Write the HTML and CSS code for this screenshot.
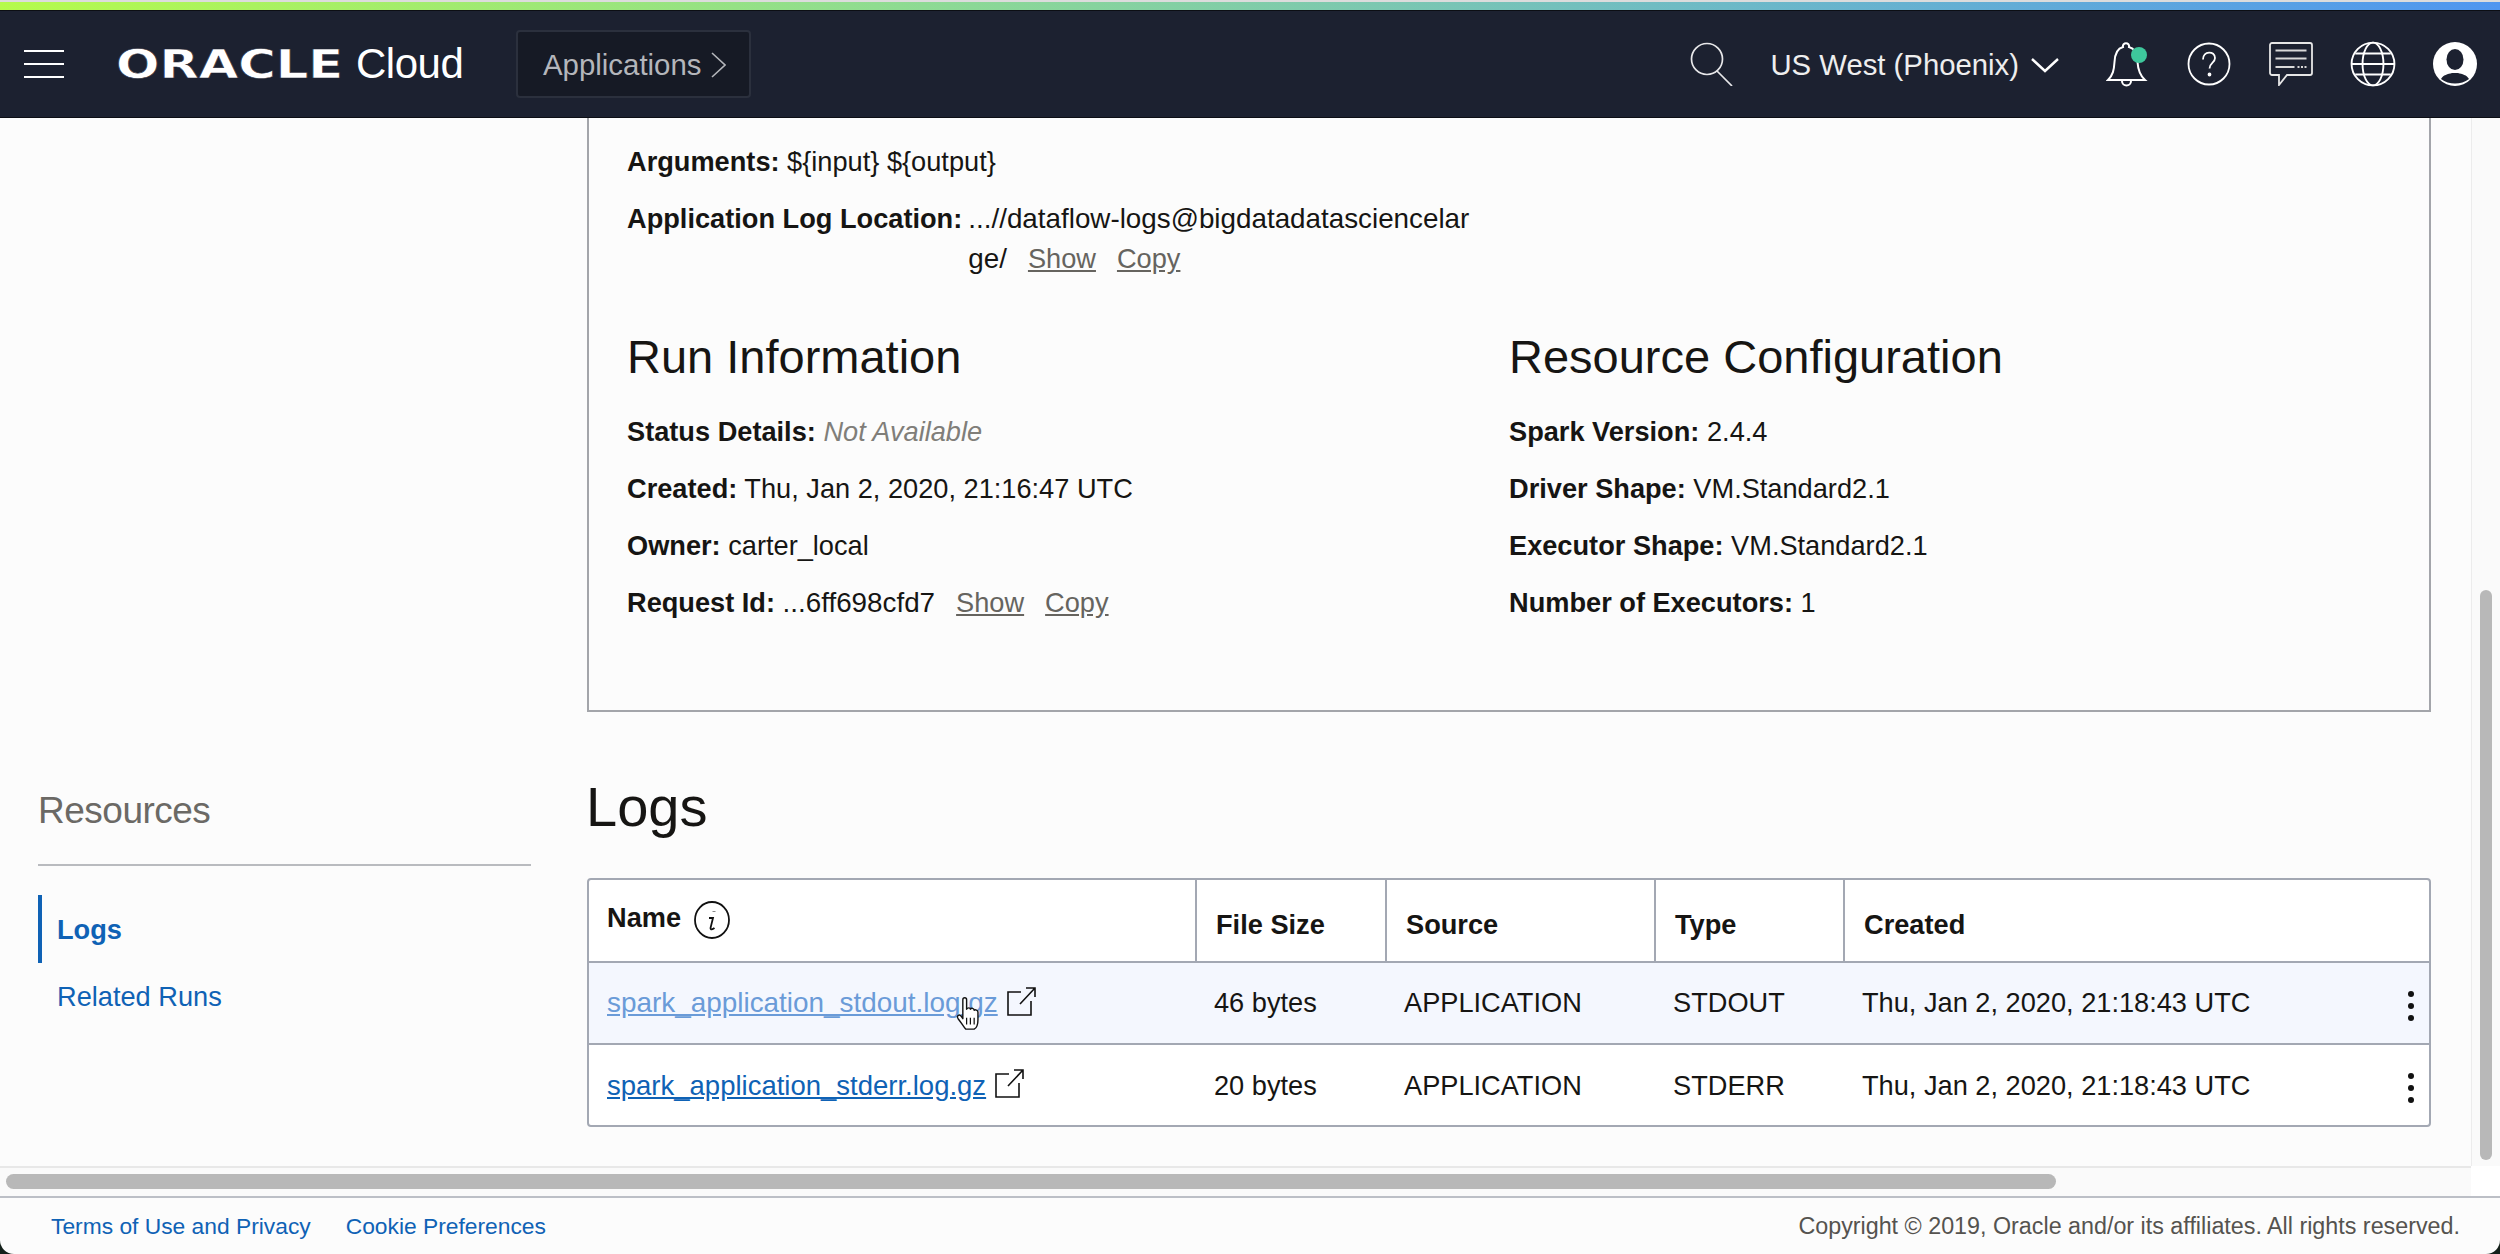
FILE: index.html
```html
<!DOCTYPE html>
<html lang="en">
<head>
    <meta charset="UTF-8">
    <title>Oracle Cloud - Data Flow Run</title>
    <link rel="stylesheet" href="styles.css">
</head>
<body>
<div class="page">
    <div class="stripe"></div>

    <header class="topbar">
        <svg class="menu-icon" viewBox="0 0 40 28" fill="none" stroke="#fff" stroke-width="2"><path d="M0 1h40M0 14h40M0 27h40"/></svg>
        <div class="logo"><span class="logo-word">ORACLE</span><span class="logo-cloud">Cloud</span></div>
        <div class="crumb">Applications
            <svg class="crumb-chevron" viewBox="0 0 15 26" fill="none" stroke="#b4b6bb" stroke-width="1.6"><path d="M1 1l13 12L1 25"/></svg>
        </div>
        <div class="topbar-right">
            <svg class="search-icon" viewBox="0 0 44 44" fill="none" stroke="#e8e8ea" stroke-width="1.7"><circle cx="17" cy="17" r="15.5"/><path d="M27 29l15 15"/></svg>
            <div class="region">US West (Phoenix)
                <svg class="region-chevron" viewBox="0 0 28 15" fill="none" stroke="#fff" stroke-width="2.4"><path d="M1 1l13 12L27 1"/></svg>
            </div>
            <svg class="bell" viewBox="0 0 42 46" fill="none" stroke="#fff" stroke-width="2"><path d="M2 39c5-5 6-10 6.500-18C9 11 13 7 17 6c-1-5 7-5 6 0 4 1 8 5 8.500 15 .5 8 2 13 7.500 18z"/><path d="M16 40c0 6 9 6 9 0"/><circle cx="33" cy="14" r="8" fill="#3ec79c" stroke="none"/></svg>
            <svg class="help" viewBox="0 0 44 44" fill="none" stroke="#fff" stroke-width="1.800"><circle cx="22" cy="22" r="20.500"/><path d="M16 17.500c0-9 12-9 12-1.500 0 5-5.500 5-5.500 10.500"/><circle cx="22.500" cy="32.500" r="1" fill="#fff"/></svg>
            <svg class="chat" viewBox="0 0 44 44" fill="none" stroke="#e6e6e6" stroke-width="1.800"><path d="M3 1h38a2 2 0 0 1 2 2v28a2 2 0 0 1-2 2H18l-8 10V33H3a2 2 0 0 1-2-2V3a2 2 0 0 1 2-2z"/><path d="M6.500 8.500h31M6.500 16.500h31M6.500 25h19" stroke="#d8d8d8" stroke-width="2.200"/><path d="M28.500 25h9" stroke="#d8d8d8" stroke-width="2" stroke-dasharray="2 1.500"/></svg>
            <svg class="globe" viewBox="0 0 44 44" fill="none" stroke="#fff" stroke-width="1.800"><circle cx="22" cy="22" r="20.500"/><ellipse cx="22" cy="22" rx="10" ry="20.500"/><path d="M1.500 22h41M5 12h34M5 32h34"/></svg>
            <svg class="user" viewBox="0 0 44 44"><circle cx="22" cy="22" r="22" fill="#fff"/><ellipse cx="22" cy="17.500" rx="8.500" ry="10.500" fill="#1c2130"/><path d="M8 37c2-4 7-5 11-6h6c4 1 9 2 11 6-8 6-20 6-28 0z" fill="#1c2130"/></svg>
        </div>
    </header>

    <div class="workspace">
        <div class="content">
            <aside class="sidebar">
                <h2 class="side-title">Resources</h2>
                <ul class="side-nav">
                    <li class="side-item active">Logs</li>
                    <li class="side-item">Related Runs</li>
                </ul>
            </aside>

            <main class="main">
                <section class="panel">
                    <p class="field args"><b>Arguments:</b> ${input} ${output}</p>
                    <div class="field log-loc">
                        <b class="log-label">Application Log Location:</b>
                        <span class="log-value">...//dataflow-logs@bigdatadatasciencelarge/<a class="action">Show</a><a class="action">Copy</a></span>
                    </div>
                    <div class="info-cols">
                        <div class="info-col">
                            <h3 class="info-title">Run Information</h3>
                            <p class="field"><b>Status Details:</b> <i class="muted">Not Available</i></p>
                            <p class="field"><b>Created:</b> Thu, Jan 2, 2020, 21:16:47 UTC</p>
                            <p class="field"><b>Owner:</b> carter_local</p>
                            <p class="field"><b>Request Id:</b> <span class="id-value">...6ff698cfd7</span><a class="action">Show</a><a class="action">Copy</a></p>
                        </div>
                        <div class="info-col">
                            <h3 class="info-title">Resource Configuration</h3>
                            <p class="field"><b>Spark Version:</b> 2.4.4</p>
                            <p class="field"><b>Driver Shape:</b> VM.Standard2.1</p>
                            <p class="field"><b>Executor Shape:</b> VM.Standard2.1</p>
                            <p class="field"><b>Number of Executors:</b> 1</p>
                        </div>
                    </div>
                </section>

                <h2 class="logs-title">Logs</h2>

                <div class="table-wrap">
                    <table class="logs">
                        <thead>
                            <tr>
                                <th class="col-name"><span class="name-head">Name
                                    <svg class="info-icon" viewBox="0 0 36 38" fill="none" stroke="#111" stroke-width="1.800"><ellipse cx="18" cy="19" rx="17" ry="18"/><path d="M20 10.500v.5" stroke-width="3"/><path d="M15 17h4l-2.500 10c0 2 2 1.500 4 0"/></svg>
                                </span></th>
                                <th class="col-size">File Size</th>
                                <th class="col-source">Source</th>
                                <th class="col-type">Type</th>
                                <th>Created</th>
                            </tr>
                        </thead>
                        <tbody>
                            <tr class="hover">
                                <td class="file-cell">
                                    <div class="file-row">
                                        <a class="file-link">spark_application_stdout.log.gz</a>
                                        <svg class="ext-icon" viewBox="0 0 29 29" fill="none" stroke="#111" stroke-width="1.600"><path d="M14 5H1v23h23V14M13 17L28 1M19 1h9v9"/></svg>
                                    </div>
                                    <svg class="hand" viewBox="0 0 28 36"><path d="M8 3c0-3 4-3 4 0v10c1-2 4-2 4 0 1-2 4-1 4 1 1-1 4 0 4 2v8c0 5-2 9-4 10H11c-2-2-4-6-8-11-2-3 1-5 3-3l2 3z" fill="#fff" stroke="#111" stroke-width="1.500" stroke-linejoin="round"/><path d="M12 22v7M16 22v7M20 22v7" stroke="#111" stroke-width="1.300"/></svg>
                                </td>
                                <td>46 bytes</td>
                                <td>APPLICATION</td>
                                <td>STDOUT</td>
                                <td class="created-cell">Thu, Jan 2, 2020, 21:18:43 UTC<span class="kebab"><i></i><i></i><i></i></span></td>
                            </tr>
                            <tr>
                                <td class="file-cell">
                                    <div class="file-row">
                                        <a class="file-link">spark_application_stderr.log.gz</a>
                                        <svg class="ext-icon" viewBox="0 0 29 29" fill="none" stroke="#111" stroke-width="1.600"><path d="M14 5H1v23h23V14M13 17L28 1M19 1h9v9"/></svg>
                                    </div>
                                </td>
                                <td>20 bytes</td>
                                <td>APPLICATION</td>
                                <td>STDERR</td>
                                <td class="created-cell">Thu, Jan 2, 2020, 21:18:43 UTC<span class="kebab"><i></i><i></i><i></i></span></td>
                            </tr>
                        </tbody>
                    </table>
                </div>
            </main>
        </div>
        <div class="vscroll"><div class="vthumb"></div></div>
    </div>

    <div class="hscroll"><div class="hthumb"></div><div class="hcorner"></div></div>

    <footer class="footer">
        <div class="footer-links"><a>Terms of Use and Privacy</a><a>Cookie Preferences</a></div>
        <div class="copyright">Copyright © 2019, Oracle and/or its affiliates. All rights reserved.</div>
    </footer>
</div>
</body>
</html>
```

FILE: styles.css
```css
* {
    box-sizing: border-box;
}
html, body {
    margin: 0;
    height: 100%;
    overflow: hidden;
}
body {
    background: #14201a;
    font-family: "Liberation Sans", Arial, sans-serif;
    font-size: 27.2px;
    color: #161513;
}
.page {
    height: 1254px;
    display: flex;
    flex-direction: column;
    background: #fcfcfc;
    border-radius: 0 0 14px 14px;
    overflow: hidden;
}
.stripe {
    height: 10px;
    flex: none;
    border-top: 2px solid #dcdcdc;
    background: linear-gradient(90deg, #b5fb4c, #8fdc90 35%, #6cb8c8 70%, #4f96f0);
}

/* top bar */
.topbar {
    height: 108px;
    flex: none;
    display: flex;
    align-items: center;
    background: #1c2130;
    border-top: 1px solid #0c0e14;
    border-bottom: 1px solid #0c0e14;
    padding-left: 24px;
    color: #fff;
}
.menu-icon {
    width: 40px;
    height: 28px;
}
.logo {
    display: flex;
    align-items: center;
    margin-left: 52px;
    width: 400px;
}
.logo-word {
    font-family: "DejaVu Sans", sans-serif;
    font-weight: bold;
    font-size: 39px;
    width: 225px;
    display: inline-block;
    transform-origin: left;
    transform: scaleX(1.31);
    -webkit-text-stroke: 0.5px #1c2130;
}
.logo-cloud {
    font-size: 42px;
    font-weight: normal;
    margin-left: 15px;
    letter-spacing: -0.5px;
}
.crumb {
    width: 235px;
    height: 68px;
    display: flex;
    align-items: center;
    gap: 10px;
    padding: 2px 0 0 25px;
    background: #161a25;
    border: 2px solid #2b303d;
    border-radius: 4px;
    color: #b4b6bb;
    font-size: 29.4px;
}
.crumb-chevron {
    width: 15px;
    height: 26px;
}
.topbar-right {
    margin-left: auto;
    display: flex;
    align-items: center;
    padding-right: 23px;
}
.search-icon {
    width: 44px;
    height: 44px;
}
.region {
    display: flex;
    align-items: center;
    gap: 12px;
    padding-top: 2px;
    margin-left: 36px;
    color: #eee;
    font-size: 29.300px;
}
.region-chevron {
    width: 28px;
    height: 15px;
}
.bell {
    width: 42px;
    height: 46px;
    margin-left: 47px;
}
.help {
    width: 44px;
    height: 44px;
    margin-left: 39px;
}
.chat {
    width: 44px;
    height: 44px;
    margin-left: 38px;
}
.globe {
    width: 46px;
    height: 46px;
    margin-left: 37px;
}
.user {
    width: 44px;
    height: 44px;
    margin-left: 37px;
}

/* content area */
.workspace {
    height: 1048px;
    flex: none;
    display: flex;
    overflow: hidden;
}
.content {
    flex: 1;
    display: grid;
    grid-template-columns: 493px 1844px;
    column-gap: 56px;
    padding-left: 38px;
}
.sidebar {
    padding-top: 672px;
}
.side-title {
    margin: 0;
    height: 76px;
    font-size: 37px;
    font-weight: normal;
    color: #6b6965;
    letter-spacing: -0.5px;
    border-bottom: 2px solid #b9bbbf;
}
.side-nav {
    list-style: none;
    margin: 29px 0 0;
    padding: 0;
}
.side-item {
    height: 68px;
    line-height: 68px;
    padding-left: 19px;
    color: #0f62b5;
}
.side-item.active {
    font-weight: bold;
    border-left: 4px solid #0f62b5;
    padding-left: 15px;
    line-height: 70px;
}
.panel {
    height: 594px;
    border: 2px solid #a3a5aa;
    border-top: 0;
    padding: 28px 38px 0;
}
.field {
    margin: 0 0 25px;
    line-height: 32px;
}
.log-loc {
    display: flex;
    gap: 6px;
}
.log-label {
    white-space: nowrap;
}
.log-value {
    width: 515px;
    word-break: break-all;
    line-height: 40px;
    margin-top: -4px;
    font-size: 27.8px;
}
.log-value .action {
    font-size: 27.2px;
}
.id-value {
    font-size: 27.8px;
}
.action {
    color: #66645f;
    text-decoration: underline;
    margin-left: 21px;
    word-break: normal;
}
.muted {
    color: #807e79;
}
.info-cols {
    display: grid;
    grid-template-columns: 882px 1fr;
    margin-top: 51px;
}
.info-title {
    margin: 0 0 32px;
    font-size: 47px;
    font-weight: normal;
    line-height: 54px;
}
.logs-title {
    margin: 0 0 0 -1px;
    height: 166px;
    padding-top: 62px;
    font-size: 56px;
    line-height: 66px;
    font-weight: normal;
}

/* logs table */
.table-wrap {
    border: 2px solid #a3a8b3;
    border-radius: 4px;
    background: #fff;
    height: 249px;
    overflow: hidden;
}
.logs {
    width: 100%;
    border-collapse: collapse;
    table-layout: fixed;
}
.logs th {
    height: 82px;
    text-align: left;
    font-weight: bold;
    padding: 9px 0 0 19px;
    border-left: 2px solid #a3a8b3;
}
.logs th:first-child {
    border-left: 0;
    padding: 0 0 0 18px;
}
.col-name { width: 607px; }
.col-size { width: 190px; }
.col-source { width: 269px; }
.col-type { width: 189px; }
.name-head {
    display: inline-flex;
    align-items: center;
    gap: 13px;
    margin-top: -12px;
}
.info-icon {
    width: 36px;
    height: 38px;
    margin-top: 5px;
}
.logs td {
    height: 82px;
    padding: 0 0 0 18px;
    border-top: 2px solid #a3a8b3;
    white-space: nowrap;
}
.hover td {
    background: #f4f7fe;
}
.file-cell {
    position: relative;
}
.file-row {
    display: flex;
    align-items: center;
    gap: 9px;
}
.file-link {
    color: #0f62b5;
    text-decoration: underline;
    font-size: 27.5px;
}
.hover .file-link {
    color: #6a9bd8;
    font-size: 27.9px;
}
.ext-icon {
    width: 29px;
    height: 29px;
    margin-top: -4px;
}
.hand {
    position: absolute;
    left: 365px;
    top: 34px;
    width: 29px;
    height: 34px;
}
.created-cell {
    position: relative;
}
.kebab {
    position: absolute;
    right: 15px;
    top: 28px;
    display: flex;
    flex-direction: column;
    gap: 6px;
}
.kebab i {
    width: 6px;
    height: 6px;
    border-radius: 50%;
    background: #111;
}

/* scrollbars */
.vscroll {
    width: 29px;
    padding: 472px 8px 0;
    background: #fafafa;
    border-left: 1px solid #ececec;
}
.vthumb {
    height: 570px;
    border-radius: 7px;
    background: #b8b8b8;
}
.hscroll {
    height: 30px;
    flex: none;
    display: flex;
    background: #fafafa;
    border-top: 2px solid #e8e8e8;
    padding: 6px 0 0 6px;
    position: relative;
}
.hthumb {
    width: 2050px;
    height: 15px;
    border-radius: 8px;
    background: #b8b8b8;
}
.hcorner {
    position: absolute;
    right: 0;
    top: -2px;
    width: 29px;
    height: 30px;
    background: #fff;
}
.footer {
    flex: 1;
    display: flex;
    justify-content: space-between;
    align-items: center;
    border-top: 2px solid #bcbfc6;
    padding: 0 40px 0 51px;
    font-size: 22.8px;
}
.footer-links a {
    color: #0f62b5;
    margin-right: 35px;
}
.copyright {
    color: #55534f;
    font-size: 23.300px;
}
```
